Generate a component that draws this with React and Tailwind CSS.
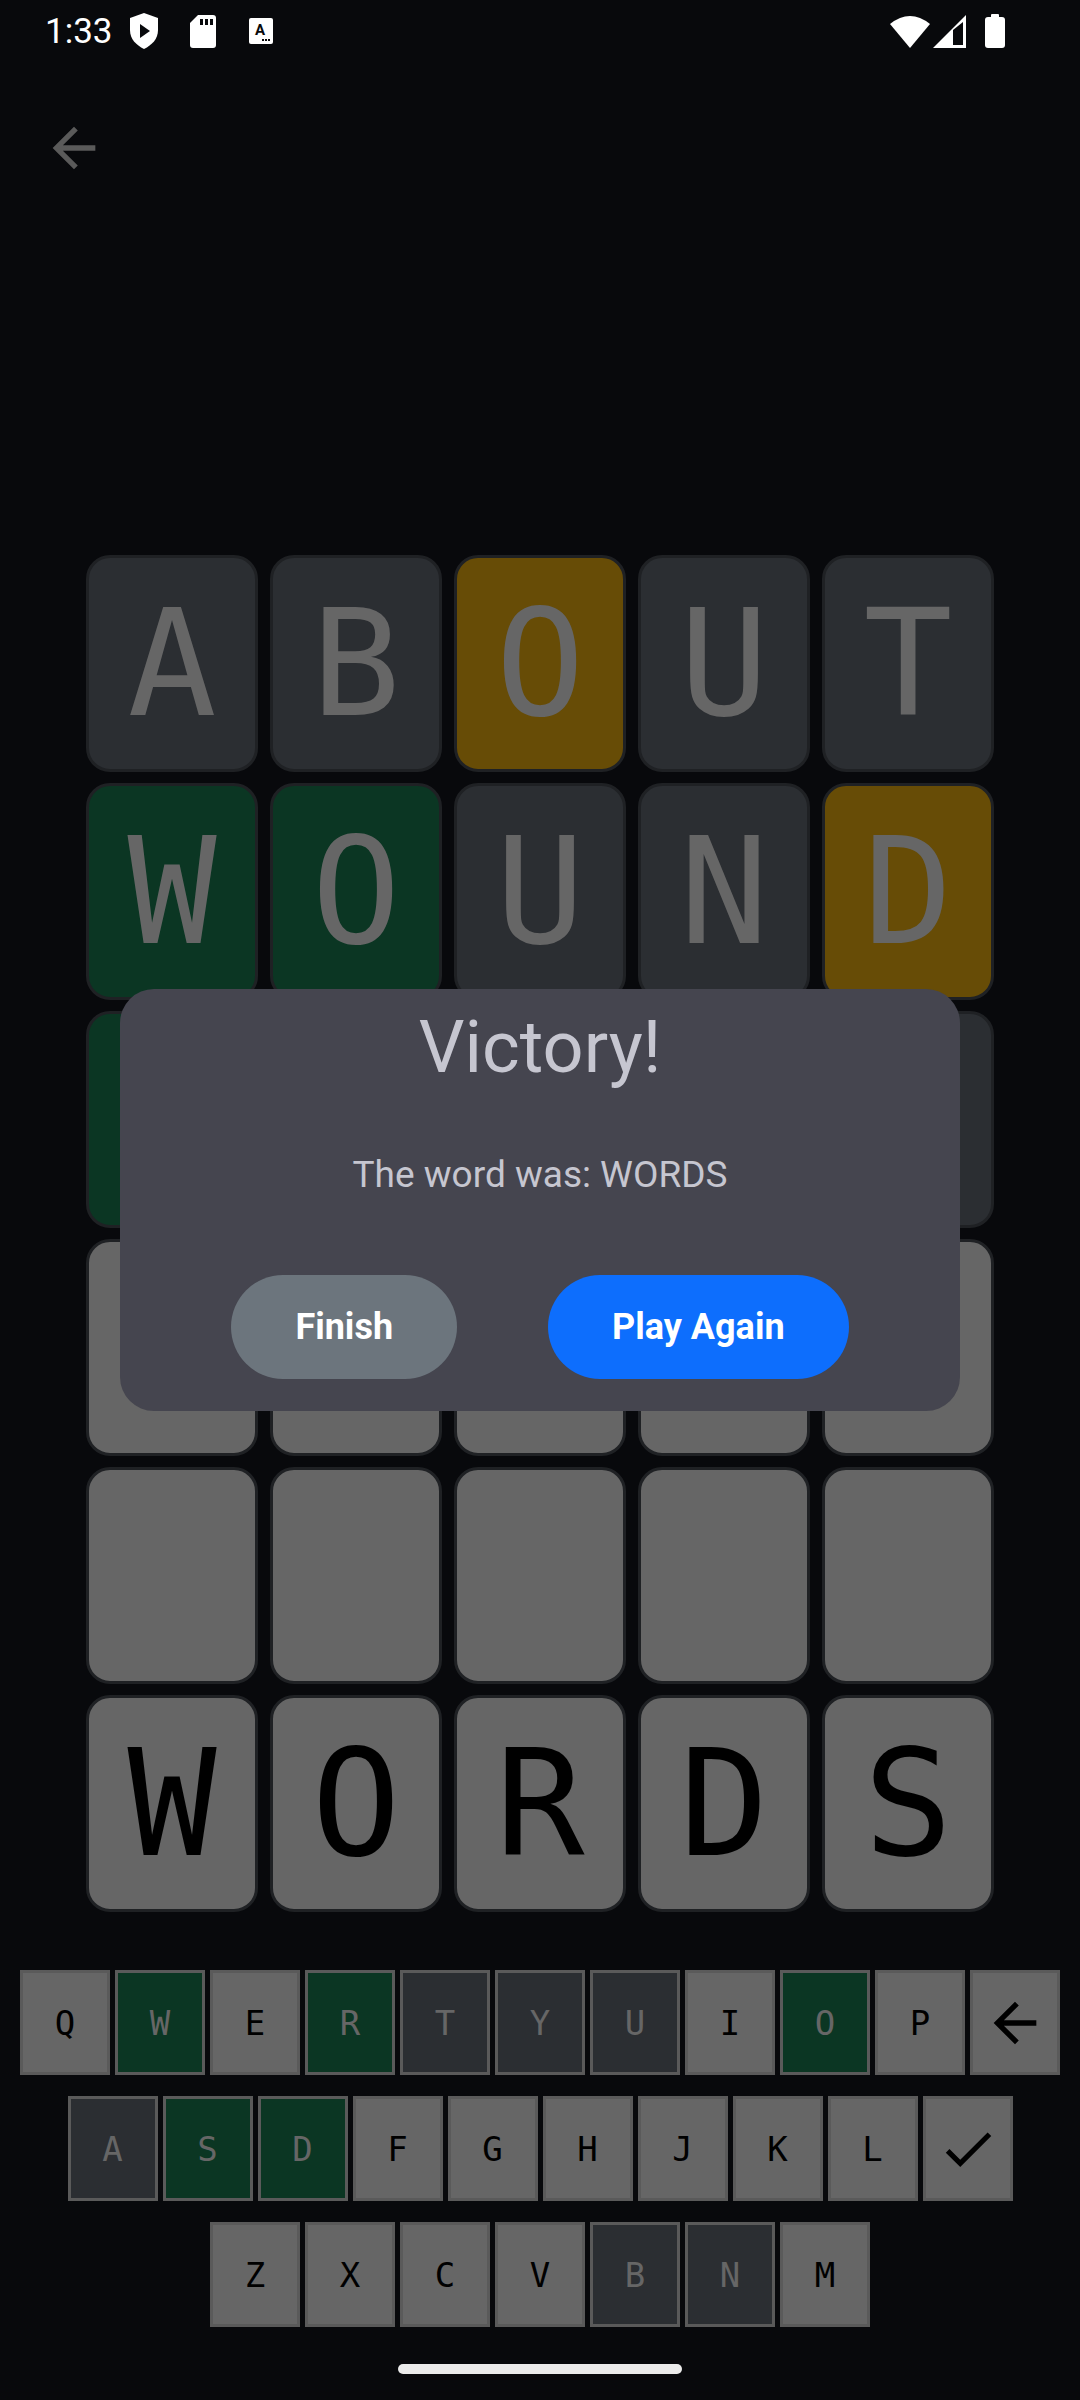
import React from "react";

const TILE_BG = {
  d: "bg-[#2b2e32]",
  y: "bg-[#674c06]",
  g: "bg-[#0b3623]",
  e: "bg-[#666666]",
};

// row 3 sits under the dialog, its letters are never seen
const board = [
  [["A", "d"], ["B", "d"], ["O", "y"], ["U", "d"], ["T", "d"]],
  [["W", "g"], ["O", "g"], ["U", "d"], ["N", "d"], ["D", "y"]],
  [["", "g"], ["", "d"], ["", "y"], ["", "d"], ["", "d"]],
  [["", "e"], ["", "e"], ["", "e"], ["", "e"], ["", "e"]],
  [["", "e"], ["", "e"], ["", "e"], ["", "e"], ["", "e"]],
  [["W", "e"], ["O", "e"], ["R", "e"], ["D", "e"], ["S", "e"]],
];

const keyRows = [
  [["Q", "e"], ["W", "g"], ["E", "e"], ["R", "g"], ["T", "d"], ["Y", "d"], ["U", "d"], ["I", "e"], ["O", "g"], ["P", "e"], ["back", "e"]],
  [["A", "d"], ["S", "g"], ["D", "g"], ["F", "e"], ["G", "e"], ["H", "e"], ["J", "e"], ["K", "e"], ["L", "e"], ["enter", "e"]],
  [["Z", "e"], ["X", "e"], ["C", "e"], ["V", "e"], ["B", "d"], ["N", "d"], ["M", "e"]],
];

const BackArrow = ({ size, color }) => (
  <svg width={size} height={size} viewBox="0 0 24 24" fill={color}>
    <path d="M20 11H7.83l5.59-5.59L12 4l-8 8 8 8 1.41-1.41L7.83 13H20v-2z" />
  </svg>
);

const Check = ({ size }) => (
  <svg width={size} height={size} viewBox="0 0 24 24" fill="#000">
    <path d="M9 16.17L4.83 12l-1.42 1.41L9 19 21 7l-1.41-1.41z" />
  </svg>
);

function StatusBar() {
  return (
    <div className="h-[62px] flex items-center justify-between pl-[45px] pr-[75px] text-white">
      <div className="flex items-center">
        <span className="font-['Roboto',sans-serif] text-[35px] leading-none">1:33</span>
        {/* shield play */}
        <svg width="30" height="36" viewBox="0 0 30 36" className="ml-[16px]">
          <path d="M15 0 L29 5 V17 C29 26 23 32 15 36 C7 32 1 26 1 17 V5 Z" fill="#fff" />
          <path d="M11 11 L21 18 L11 25 Z" fill="#08090c" />
        </svg>
        {/* sd card */}
        <svg width="26" height="33" viewBox="0 0 26 33" className="ml-[31px]">
          <path d="M8 0 H23 a3 3 0 0 1 3 3 V30 a3 3 0 0 1 -3 3 H3 a3 3 0 0 1 -3 -3 V8 Z" fill="#fff" />
          <rect x="10" y="4" width="3" height="6" fill="#08090c" />
          <rect x="15" y="4" width="3" height="6" fill="#08090c" />
          <rect x="20" y="4" width="3" height="6" fill="#08090c" />
        </svg>
        {/* A box */}
        <svg width="24" height="26" viewBox="0 0 24 26" className="ml-[33px]">
          <rect x="0" y="0" width="24" height="26" rx="2" fill="#fff" />
          <text x="11" y="17" textAnchor="middle" fontFamily="Roboto, sans-serif" fontWeight="700" fontSize="15" fill="#08090c">A</text>
          <rect x="13" y="21" width="2" height="2" fill="#08090c" />
          <rect x="16" y="21" width="2" height="2" fill="#08090c" />
          <rect x="19" y="21" width="2" height="2" fill="#08090c" />
        </svg>
      </div>
      <div className="flex items-center">
        {/* wifi */}
        <svg width="40" height="33" viewBox="0 0 40 33">
          <path d="M20 33 L0 9 Q20 -7 40 9 Z" fill="#fff" />
        </svg>
        {/* signal */}
        <svg width="33" height="33" viewBox="0 0 33 33" className="ml-[3px]">
          <path d="M0 33 L33 0 V33 Z" fill="#fff" />
          <path d="M20 15 L30 7 V30 H20 Z" fill="#08090c" />
        </svg>
        {/* battery */}
        <svg width="20" height="34" viewBox="0 0 20 34" className="ml-[19px]">
          <rect x="6" y="0" width="8" height="4" rx="1" fill="#fff" />
          <rect x="0" y="3" width="20" height="31" rx="3" fill="#fff" />
        </svg>
      </div>
    </div>
  );
}

function Tile({ letter, color, dark }) {
  return (
    <div
      className={`h-[217px] rounded-[24px] border-[3px] border-[#1f2124] flex items-center justify-center font-['DejaVu_Sans_Mono',monospace] text-[148px] leading-none ${TILE_BG[color]} ${
        dark ? "text-black" : "text-[#666666]"
      }`}
    >
      {letter}
    </div>
  );
}

function Key({ k, color }) {
  const textColor = color === "e" ? "text-black" : "text-[#666666]";
  return (
    <div
      className={`w-[90px] h-[105px] border-[3px] border-[#5a5a5a] flex items-center justify-center font-['DejaVu_Sans_Mono',monospace] text-[34px] leading-none ${TILE_BG[color]} ${textColor}`}
    >
      {k === "back" ? <BackArrow size={64} color="#000" /> : k === "enter" ? <Check size={62} /> : k}
    </div>
  );
}

export default function App() {
  return (
    <div className="relative w-[1080px] h-[2400px] bg-[#08090c] flex flex-col overflow-hidden">
      <StatusBar />

      <div className="pt-[54px] pl-[42px]">
        <BackArrow size={64} color="#5a5a5a" />
      </div>

      {/* board */}
      <div className="mt-[375px] px-[86px] grid grid-cols-5 gap-x-[12px] gap-y-[11px]">
        {board.map((row, r) =>
          row.map(([l, c], i) => <Tile key={`${r}-${i}`} letter={l} color={c} dark={r === 5} />)
        )}
      </div>

      {/* keyboard */}
      <div className="mt-[58px] flex flex-col gap-[21px]">
        {keyRows.map((row, r) => (
          <div key={r} className="flex justify-center gap-[5px]">
            {row.map(([k, c]) => (
              <Key key={k} k={k} color={c} />
            ))}
          </div>
        ))}
      </div>

      <div className="mt-[37px] mx-auto w-[284px] h-[10px] rounded-full bg-[#ebebeb]" />

      {/* result dialog */}
      <div className="absolute left-[120px] top-[989px] w-[840px] h-[422px] rounded-[34px] bg-[#45454f] flex flex-col items-center pt-[23px] pb-[32px] font-['Roboto',sans-serif]">
        <h2 className="text-[72px] leading-none text-[#c6c6d0]">Victory!</h2>
        <p className="mt-[72px] text-[37px] leading-none text-[#c6c6d0]">The word was: WORDS</p>
        <div className="mt-auto flex gap-[91px]">
          <button className="h-[104px] px-[64px] rounded-full bg-[#6c757d] text-white text-[36px] font-bold">Finish</button>
          <button className="h-[104px] px-[64px] rounded-full bg-[#0d6efd] text-white text-[36px] font-bold">Play Again</button>
        </div>
      </div>
    </div>
  );
}
